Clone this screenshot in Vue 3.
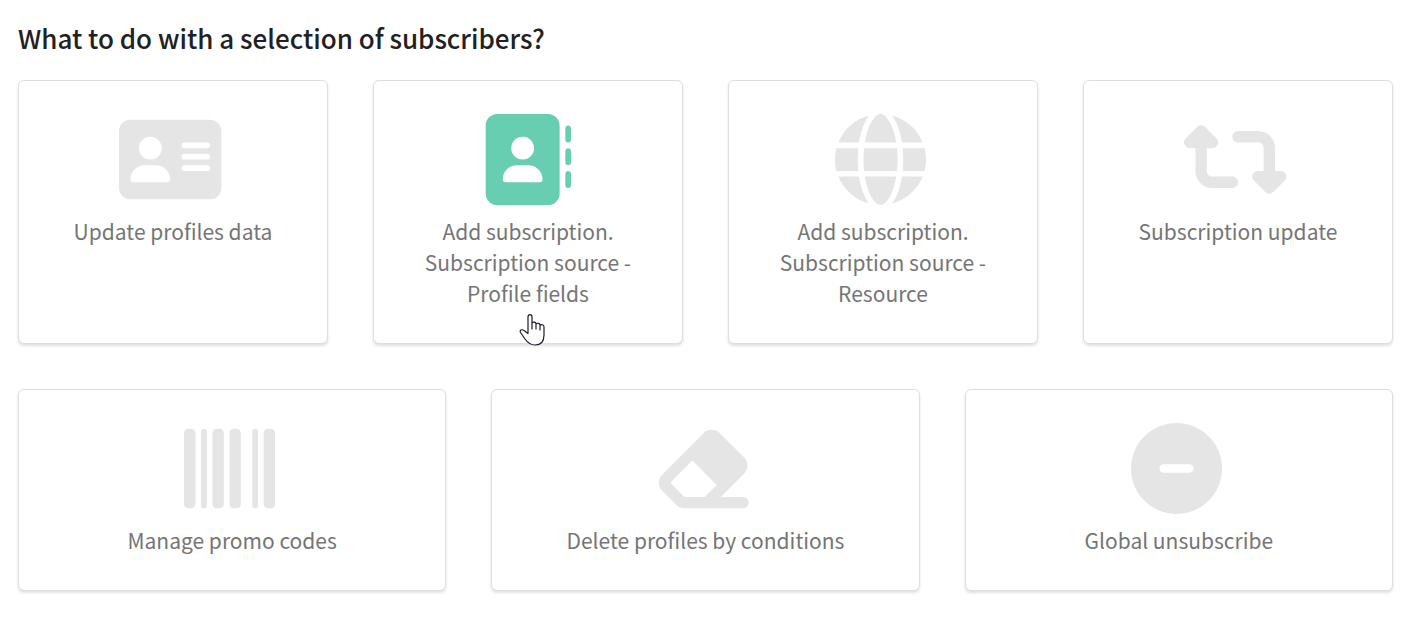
<script setup>
const icons = {
  card: {
    width: 576,
    path: 'M64 32C28.7 32 0 60.7 0 96v320c0 35.3 28.7 64 64 64h448c35.3 0 64-28.7 64-64V96c0-35.3-28.7-64-64-64H64zM176 128a64 64 0 1 1 0 128 64 64 0 1 1 0-128zM144 288h64c44.2 0 80 35.8 80 80c0 8.8-7.2 16-16 16H80c-8.8 0-16-7.2-16-16c0-44.2 35.8-80 80-80zM368 160h128a16 16 0 0 1 0 32H368a16 16 0 0 1 0-32zM368 224h128a16 16 0 0 1 0 32H368a16 16 0 0 1 0-32zM368 288h128a16 16 0 0 1 0 32H368a16 16 0 0 1 0-32z',
  },
  book: {
    width: 512,
    path: 'M96 0C60.7 0 32 28.7 32 64v384c0 35.3 28.7 64 64 64h288c35.3 0 64-28.7 64-64V64c0-35.3-28.7-64-64-64H96zM240 128a64 64 0 1 1 0 128 64 64 0 1 1 0-128zM208 288h64c44.2 0 80 35.8 80 80c0 8.8-7.2 16-16 16H144c-8.8 0-16-7.2-16-16c0-44.2 35.8-80 80-80zM496 64c-8.8 0-16 7.2-16 16v64a16 16 0 0 0 32 0V80c0-8.8-7.2-16-16-16zM496 192c-8.8 0-16 7.2-16 16v64a16 16 0 0 0 32 0v-64c0-8.8-7.2-16-16-16zM496 320c-8.8 0-16 7.2-16 16v64a16 16 0 0 0 32 0v-64c0-8.8-7.2-16-16-16z',
  },
  globe: {
    width: 512,
    path: 'M352 256c0 22.2-1.2 43.6-3.3 64H163.3c-2.2-20.4-3.3-41.8-3.3-64s1.2-43.6 3.3-64H348.7c2.2 20.4 3.3 41.8 3.3 64zm28.8-64H503.9c5.3 20.5 8.1 41.9 8.1 64s-2.8 43.5-8.1 64H380.8c2.1-20.6 3.2-42 3.2-64s-1.1-43.4-3.2-64zm112.6-32H376.7c-10-63.9-29.8-117.4-55.3-151.6c78.3 20.7 142 77.5 171.9 151.6zm-149.1 0H167.7c6.1-36.4 15.5-68.6 27-94.7c10.5-23.6 22.2-40.7 33.5-51.5C239.4 3.2 248.7 0 256 0s16.6 3.2 27.8 13.8c11.3 10.8 23 27.9 33.5 51.5c11.6 26 20.9 58.2 27 94.7zm-209 0H18.6C48.6 85.9 112.2 29.1 190.6 8.4C165.1 42.6 145.3 96.1 135.3 160zM8.1 192H131.2c-2.1 20.6-3.2 42-3.2 64s1.1 43.4 3.2 64H8.1C2.8 299.5 0 278.1 0 256s2.8-43.5 8.1-64zM194.7 446.6c-11.6-26-20.9-58.2-27-94.6H344.3c-6.1 36.4-15.5 68.6-27 94.6c-10.5 23.6-22.2 40.7-33.5 51.5C272.6 508.8 263.3 512 256 512s-16.6-3.2-27.8-13.8c-11.3-10.8-23-27.9-33.5-51.5zM135.3 352c10 63.9 29.8 117.4 55.3 151.6C112.2 482.9 48.6 426.1 18.6 352H135.3zm358.1 0c-30 74.1-93.6 130.9-171.9 151.6c25.5-34.2 45.2-87.7 55.3-151.6H493.4z',
  },
  retweet: {
    width: 576,
    path: 'M272 416c17.7 0 32-14.3 32-32s-14.3-32-32-32H160c-17.7 0-32-14.3-32-32V192h32c12.9 0 24.6-7.8 29.6-19.8s2.2-25.7-6.9-34.9l-64-64c-12.5-12.5-32.8-12.5-45.3 0l-64 64c-9.2 9.2-11.9 22.9-6.9 34.9s16.6 19.8 29.6 19.8h32v128c0 53 43 96 96 96h112zM304 96c-17.7 0-32 14.3-32 32s14.3 32 32 32h112c17.7 0 32 14.3 32 32v128h-32c-12.9 0-24.6 7.8-29.6 19.8s-2.2 25.7 6.9 34.9l64 64c12.5 12.5 32.8 12.5 45.3 0l64-64c9.2-9.2 11.9-22.9 6.9-34.9s-16.6-19.8-29.6-19.8h-32V192c0-53-43-96-96-96H304z',
  },
  barcode: {
    width: 512,
    path: 'M24 32h16a24 24 0 0 1 24 24v400a24 24 0 0 1-24 24H24a24 24 0 0 1-24-24V56a24 24 0 0 1 24-24zM112 32a16 16 0 0 1 16 16v416a16 16 0 0 1-32 0V48a16 16 0 0 1 16-16zM184 32h16a24 24 0 0 1 24 24v400a24 24 0 0 1-24 24h-16a24 24 0 0 1-24-24V56a24 24 0 0 1 24-24zM280 32h16a24 24 0 0 1 24 24v400a24 24 0 0 1-24 24h-16a24 24 0 0 1-24-24V56a24 24 0 0 1 24-24zM400 32a16 16 0 0 1 16 16v416a16 16 0 0 1-32 0V48a16 16 0 0 1 16-16zM472 32h16a24 24 0 0 1 24 24v400a24 24 0 0 1-24 24h-16a24 24 0 0 1-24-24V56a24 24 0 0 1 24-24z',
  },
  eraser: {
    width: 576,
    path: 'M290.7 57.4L57.4 290.7c-25 25-25 65.5 0 90.5l80 80c12 12 28.3 18.7 45.3 18.7H512c17.7 0 32-14.3 32-32s-14.3-32-32-32H387.9L518.6 285.3c25-25 25-65.5 0-90.5L381.3 57.4c-25-25-65.5-25-90.5 0zM297.4 416H182.6l-80-80L227.3 211.3 364.7 348.7 297.4 416z',
  },
  minus: {
    width: 512,
    path: 'M256 0a256 256 0 1 1 0 512 256 256 0 1 1 0-512zM184 232a24 24 0 0 0 0 48h144a24 24 0 0 0 0-48H184z',
  },
}

const rows = [
  [
    { label: 'Update profiles data', icon: icons.card },
    { label: 'Add subscription. Subscription source - Profile fields', icon: icons.book, active: true },
    { label: 'Add subscription. Subscription source - Resource', icon: icons.globe },
    { label: 'Subscription update', icon: icons.retweet },
  ],
  [
    { label: 'Manage promo codes', icon: icons.barcode },
    { label: 'Delete profiles by conditions', icon: icons.eraser },
    { label: 'Global unsubscribe', icon: icons.minus },
  ],
]
</script>

<template>
  <main class="page">
    <h1 class="title">What to do with a selection of subscribers?</h1>
    <div v-for="(row, r) in rows" :key="r" class="row">
      <button v-for="item in row" :key="item.label" type="button" class="card" :class="{ active: item.active }">
        <svg class="icon" :viewBox="`0 0 ${item.icon.width} 512`" aria-hidden="true">
          <path :d="item.icon.path" fill-rule="evenodd" />
        </svg>
        <span class="label">{{ item.label }}</span>
        <svg v-if="item.active" class="pointer" viewBox="0 0 26 34" aria-hidden="true">
          <path d="M9 20V4C9 .8 13 .8 13 4V10C14.5 8.5 17 9 17 11C18.5 9.7 21 10.2 21 12.2C22.5 11 25 11.5 25 14V22C25 28 22 32 16 32C11 32 8.5 29.5 6 26L1.5 19.5C.2 17 3 16 5 17.5L9 20.5M13 10V16M17 11V16M21 12.5V17" />
        </svg>
      </button>
    </div>
  </main>
</template>

<style>
body {
  margin: 0;
  background: #fff;
}
</style>

<style scoped>
.page {
  display: flex;
  flex-direction: column;
  padding: 18px 19px 28px 18px;
  font-family: "Noto Sans CJK SC", "Noto Sans", sans-serif;
}

.title {
  margin: 0 0 22px;
  font-size: 26px;
  line-height: 40px;
  font-weight: 500;
  color: #212121;
}

.row {
  display: flex;
  gap: 45px;
}

.row + .row {
  margin-top: 45px;
}

.card {
  position: relative;
  flex: 1 1 0;
  display: flex;
  flex-direction: column;
  align-items: center;
  min-width: 0;
  box-sizing: border-box;
  padding: 33px 32px 34px;
  border: 1px solid #dedede;
  border-radius: 6px;
  background: #fff;
  box-shadow: 0 2px 3px rgba(0, 0, 0, 0.12);
  font-family: inherit;
  color: #757575;
  cursor: pointer;
}

.icon {
  display: block;
  height: 91px;
  margin: 0 5px 11px 0;
  fill: #e5e5e5;
}

.active .icon {
  fill: #68ceb2;
}

.label {
  font-size: 21px;
  line-height: 31px;
  text-align: center;
}

.pointer {
  position: absolute;
  left: 145px;
  bottom: -4px;
  width: 26px;
  height: 34px;
  fill: #fff;
  stroke: #1b1b2b;
  stroke-width: 1.2;
  stroke-linejoin: round;
  stroke-linecap: round;
}
</style>
